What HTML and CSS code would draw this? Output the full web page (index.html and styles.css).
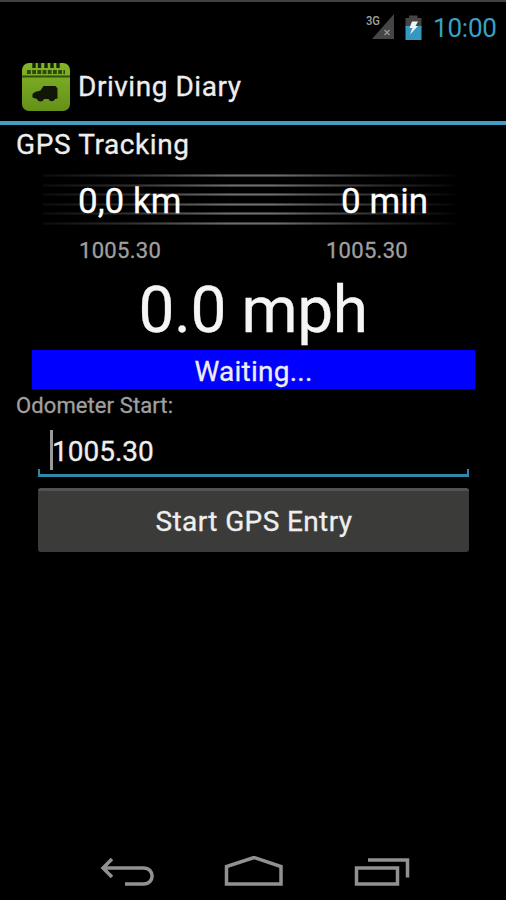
FILE: index.html
```html
<!DOCTYPE html>
<html lang="en">
<head>
<meta charset="utf-8">
<title>Driving Diary</title>
<link rel="stylesheet" href="styles.css">
</head>
<body>
<div class="screen">
  <div class="status">
    <svg class="signal" width="30" height="28" viewBox="0 0 30 28">
      <path d="M29 1V26H7Z" fill="#454545"/>
      <path d="M19.500 17l5 5m0-5l-5 5" stroke="#999" stroke-width="1.300"/>
      <text class="network" x="1" y="12" textLength="14" lengthAdjust="spacingAndGlyphs">3G</text>
    </svg>
    <svg class="battery" width="17" height="26" viewBox="0 0 17 26">
      <path d="M0.500 3H4V0.500H12.500V3H16.500V13H0.500Z" fill="#454545"/>
      <path d="M0.500 11H16.500V25H0.500Z" fill="#3798be"/>
      <path d="M7 6.500H13L10.500 11H13L5 19.500L7.500 13H4.500Z" fill="#edf7f8"/>
    </svg>
    <span class="clock">10:00</span>
  </div>
  <header class="header">
    <svg class="logo" width="50" height="50" viewBox="0 0 50 50">
      <defs>
        <linearGradient id="leaf" x2="0" y2="1"><stop offset="0" stop-color="#83b52a"/><stop offset="1" stop-color="#649018"/></linearGradient>
      </defs>
      <rect x="1" y="1" width="48" height="48" rx="7" fill="url(#leaf)"/>
      <path d="M1 14.500H49" stroke="#31500b" stroke-width="1.800"/>
      <path d="M13 1V6M18.500 1V6M25 1V6M31 1V6M37 1V6" stroke="#16230a" stroke-width="3.400"/>
      <path d="M6 10H44" stroke="#2d490d" stroke-width="4" stroke-dasharray="3.800 1.400"/>
      <path d="M11.500 32L14 30L19.500 28.500L22.500 24H34.500L36.500 26.500V36.500L34 37A3.500 3.500 0 0 1 27.500 37H23A3.700 3.700 0 0 1 16 37L11.500 35.500Z" fill="#101707"/>
    </svg>
    <h1 class="title">Driving Diary</h1>
  </header>
  <main class="content">
    <h2 class="heading">GPS Tracking</h2>
    <div class="band"><span class="distance">0,0 km</span><span class="minutes">0 min</span></div>
    <div class="readings"><span class="reading-start">1005.30</span><span class="reading-end">1005.30</span></div>
    <div class="speed">0.0 mph</div>
    <div class="state">Waiting...</div>
    <div class="label">Odometer Start:</div>
    <div class="field"><span class="caret"></span><span class="value">1005.30</span></div>
    <button class="start">Start GPS Entry</button>
  </main>
  <nav class="nav">
    <svg width="54" height="32" viewBox="0 0 54 32"><path d="M12 3L3 12L12 21M3 12H43.500C55 12 55 28 43.500 28H25" /></svg>
    <svg width="60" height="32" viewBox="0 0 60 32"><path d="M2.500 28V10.500L30 1.500L57 10.500V28Z"/></svg>
    <svg width="56" height="32" viewBox="0 0 56 32"><path d="M2.500 12H43.500V28H2.500ZM14 4H53.500V21.500"/></svg>
  </nav>
</div>
</body>
</html>
```

FILE: styles.css
```css
* { box-sizing: border-box; }
body { margin: 0; background: #000; color: #eee; font-family: Roboto, "Liberation Sans", sans-serif; font-size: 28px; }
.screen { width: 506px; height: 900px; display: flex; flex-direction: column; background: #000; overflow: hidden; -webkit-text-stroke: 0.3px; }
.status { height: 52px; border-top: 2px solid #414141; padding: 1px 9px 0 0; display: flex; align-items: center; justify-content: flex-end; }
.signal { margin: 0 10px 2px 0; }
.network { font: 500 13px Roboto, sans-serif; fill: #a0a0a0; -webkit-text-stroke: 0; }
.battery { margin-right: 11px; }
.clock { font-size: 26px; line-height: 30px; margin-top: 1px; color: #3aa0c6; width: 64px; white-space: nowrap; letter-spacing: -0.2px; -webkit-text-stroke: 0; }
.header { height: 73px; border-bottom: 4px solid #429fc3; padding: 0 0 0 21px; display: flex; align-items: center; }
.logo { margin-top: 1px; }
.title, .heading { margin: 0; font-size: 28px; font-weight: 400; letter-spacing: 0.53px; }
.title { margin-left: 7px; line-height: 68px; }
.content { flex: 1; display: flex; flex-direction: column; }
.heading { padding-left: 16px; line-height: 40px; height: 47px; letter-spacing: 0.6px; }
.band {
  height: 54px; margin: 0 46px 0 43px; padding: 0 32px 0 35px;
  display: flex; justify-content: space-between;
  font-size: 35px; line-height: 59px; color: #fff;
  background:
    linear-gradient(90deg, rgba(0, 0, 0, 0.9) 0%, rgba(0, 0, 0, 0.6) 20%, transparent 45%, transparent 55%, rgba(0, 0, 0, 0.6) 80%, rgba(0, 0, 0, 0.9) 96%, #000 100%),
    repeating-linear-gradient(180deg, transparent 0 2px, #404040 2px 3px, #707070 3px 4px, #404040 4px 5px, transparent 5px 9.600px);
}
.readings { height: 40px; padding: 0 98px 0 79px; display: flex; justify-content: space-between; font-size: 22px; letter-spacing: 0.3px; line-height: 50px; color: #a0a0a0; }
.speed { height: 84px; text-align: center; font-size: 64px; letter-spacing: -0.4px; line-height: 90px; color: #f5f5f5; }
.state { height: 39px; margin: 0 31px 0 32px; background: #0000fe; text-align: center; line-height: 43px; letter-spacing: 0.25px; }
.label { height: 35px; padding-left: 16px; font-size: 22px; line-height: 34px; letter-spacing: 0.1px; color: #a0a0a0; }
.field { height: 53px; margin: 0 37px 0 38px; padding-left: 12px; display: flex; align-items: flex-start; border-bottom: 3px solid #2d88a9; background: linear-gradient(#2d88a9, #2d88a9) left bottom / 2px 5px no-repeat, linear-gradient(#2d88a9, #2d88a9) right bottom / 2px 5px no-repeat; }
.caret { width: 3px; height: 40px; margin-top: 6px; background: #999; }
.value { line-height: 55px; margin-left: -1px; }
.start { height: 64px; margin: 11px 37px 0 38px; padding: 0 0 1px 1px; border: 0; border-top: 3px solid #525351; border-radius: 3px; background: #3b3c3a; color: #eee; font: 28px Roboto, sans-serif; letter-spacing: 0.38px; -webkit-text-stroke: 0.3px; }
.nav { height: 46px; padding: 2px 96px 0 100px; display: flex; justify-content: space-between; }
.nav svg { fill: none; stroke: #919191; stroke-width: 3.500; }
```
